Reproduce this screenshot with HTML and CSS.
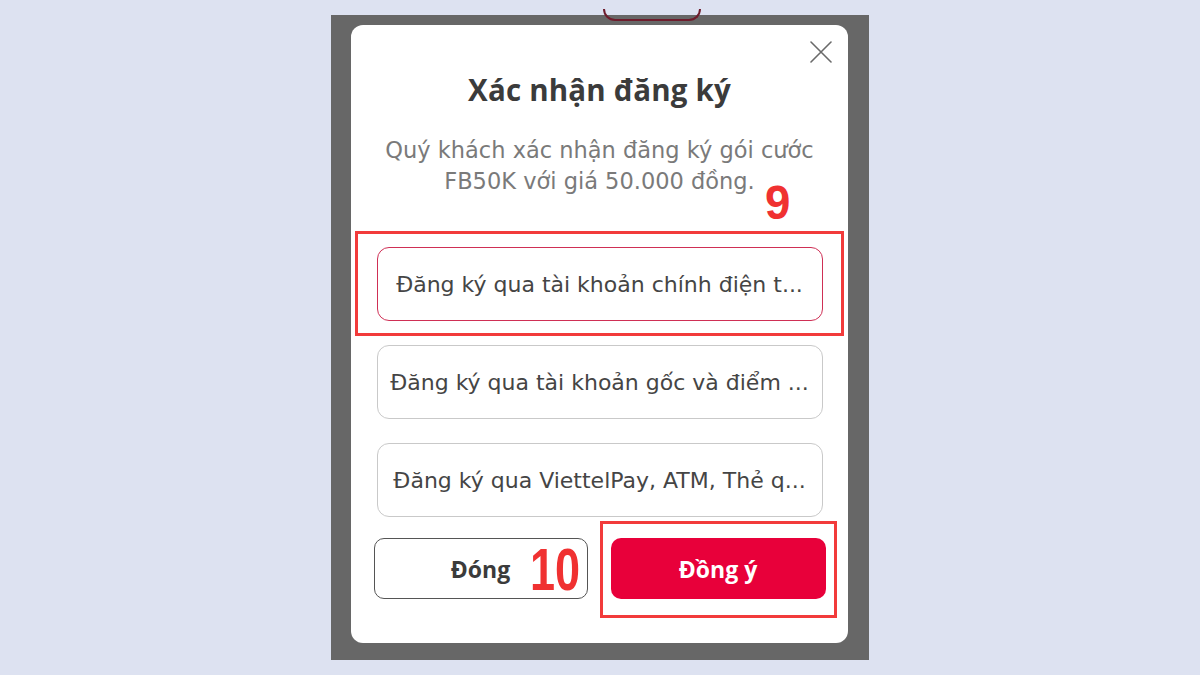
FILE: index.html
```html
<!DOCTYPE html>
<html lang="vi">
<head>
<meta charset="utf-8">
<title>Xác nhận đăng ký</title>
<link rel="stylesheet" href="styles.css">
</head>
<body>
<div class="stage">
  <div class="phone">
    <div class="behind">
      <span class="behind-pill"></span>
    </div>
    <div class="modal">
      <div class="close-row">
        <svg class="close" viewBox="0 0 22 22" width="22" height="22" aria-hidden="true">
          <path d="M1 1 L21 21 M21 1 L1 21" stroke="#6a6a6a" stroke-width="1.6" fill="none" stroke-linecap="round"/>
        </svg>
      </div>
      <h1 class="title">Xác nhận đăng ký</h1>
      <p class="desc">Quý khách xác nhận đăng ký gói cước<br>FB50K với giá 50.000 đồng.</p>
      <div class="options">
        <div class="option selected">Đăng ký qua tài khoản chính điện t...</div>
        <div class="option">Đăng ký qua tài khoản gốc và điểm ...</div>
        <div class="option">Đăng ký qua ViettelPay, ATM, Thẻ q...</div>
      </div>
      <div class="actions">
        <div class="btn btn-close">Đóng</div>
        <div class="btn btn-ok">Đồng ý</div>
      </div>

      <div class="mark mark-1"></div>
      <div class="num num-9">9</div>
      <div class="mark mark-2"></div>
      <div class="num num-10">10</div>
    </div>
  </div>
</div>
</body>
</html>
```

FILE: styles.css
```css
html, body {
  margin: 0;
  padding: 0;
}
body {
  background: #dde2f1;
  width: 1200px;
  height: 675px;
  overflow: hidden;
  font-family: "DejaVu Sans", "Noto Sans", sans-serif;
}
.stage {
  display: flex;
  justify-content: center;
  padding-top: 15px;
}
.phone {
  width: 538px;
  height: 645px;
  background: #676767;
  box-sizing: border-box;
  padding: 0 21px 0 20px;
  display: flex;
  flex-direction: column;
}
.behind {
  height: 10px;
  position: relative;
}
.behind-pill {
  position: absolute;
  left: 252px;
  top: -6px;
  width: 94px;
  height: 10px;
  border: 2px solid #6e1c2c;
  border-top: none;
  border-radius: 0 0 12px 12px;
}
.modal {
  position: relative;
  background: #fff;
  border-radius: 12px;
  height: 618px;
  box-sizing: border-box;
  padding: 16px 0 0 0;
  display: flex;
  flex-direction: column;
  align-items: center;
}
.close-row {
  align-self: stretch;
  display: flex;
  justify-content: flex-end;
  padding-right: 16px;
  height: 22px;
}
.close {
  display: block;
}
.title {
  margin: 9px 0 0 0;
  font-family: "Open Sans", "Noto Sans", sans-serif;
  font-weight: 700;
  font-size: 29.5px;
  line-height: 36px;
  color: #3b3b3b;
  letter-spacing: 0.2px;
}
.desc {
  margin: 27px 0 0 0;
  text-align: center;
  font-size: 22.5px;
  line-height: 31px;
  color: #7a7a7a;
}
.options {
  margin-top: 50px;
  width: 446px;
  display: flex;
  flex-direction: column;
  gap: 24px;
}
.option {
  height: 74px;
  box-sizing: border-box;
  border: 1.5px solid #c9c9c9;
  border-radius: 12px;
  display: flex;
  align-items: center;
  justify-content: center;
  font-size: 22px;
  color: #454545;
  white-space: nowrap;
}
.option.selected {
  border-color: #cf2f55;
}
.actions {
  margin-top: 21px;
  width: 452px;
  display: flex;
  justify-content: space-between;
}
.btn {
  height: 61px;
  box-sizing: border-box;
  border-radius: 10px;
  display: flex;
  align-items: center;
  justify-content: center;
  font-family: "Open Sans", "Noto Sans", sans-serif;
  font-weight: 700;
  font-size: 23px;
}
.btn-close {
  width: 214px;
  border: 1.5px solid #555;
  color: #3b3b3b;
}
.btn-ok {
  width: 215px;
  background: #e8003a;
  color: #fff;
}
.mark {
  position: absolute;
  border: 3px solid #f23b3b;
  box-sizing: border-box;
}
.mark-1 {
  left: 4px;
  top: 206px;
  width: 489px;
  height: 105px;
}
.mark-2 {
  left: 249px;
  top: 496px;
  width: 237px;
  height: 97px;
}
.num {
  position: absolute;
  font-family: "Liberation Sans", Arial, sans-serif;
  font-weight: 700;
  color: #f03131;
  transform-origin: left top;
}
.num-9 {
  left: 414px;
  top: 154px;
  font-size: 48px;
  line-height: 48px;
  transform: scaleX(0.95);
}
.num-10 {
  left: 179px;
  top: 515px;
  font-size: 60px;
  line-height: 60px;
  transform: scaleX(0.75);
}
```
